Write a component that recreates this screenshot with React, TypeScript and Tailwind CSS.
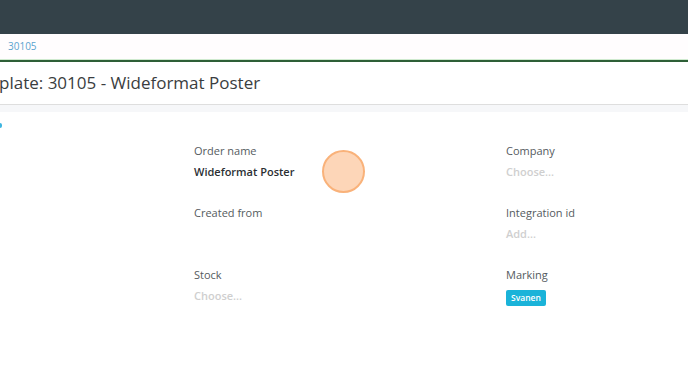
import { useState } from 'react';

const font = { fontFamily: '"Open Sans", "Liberation Sans", sans-serif' };

interface FieldProps {
  label: string;
  value?: string;
  placeholder?: string;
  badge?: string;
}

function Field({ label, value, placeholder, badge }: FieldProps) {
  return (
    <div className="flex flex-col">
      <div className="h-4 leading-4 text-[11px] text-[#555b60]">{label}</div>
      {value && (
        <div className="h-4 mt-[5px] leading-4 text-[11px] font-semibold text-[#2b2f33]">{value}</div>
      )}
      {placeholder && (
        <div className="h-4 mt-[5px] leading-4 text-[11px] font-semibold text-[#cfcfcf]">{placeholder}</div>
      )}
      {badge && (
        <div className="flex mt-[7px]">
          <span className="flex items-center h-4 px-[5px] rounded-[2px] bg-[#1ab3d9] text-white text-[8.5px] leading-none font-semibold">
            {badge}
          </span>
        </div>
      )}
    </div>
  );
}

export default function App() {
  const [clicked] = useState(true);

  return (
    <div className="relative w-[688px] h-[383px] overflow-hidden bg-white" style={font}>
      <div className="h-[34px] bg-[#344249]" />
      <div className="h-[26px] flex items-center pl-2 bg-[#fffdfe] border-b border-[#cfeacf]">
        <span className="text-[10px] text-[#5aa3cf]">30105</span>
      </div>
      <div className="h-[2px] bg-[#2e5f37]" />
      <div className="h-[43px] flex items-center border-b border-[#dedede]">
        <h1 className="text-[17px] text-[#3a3d40] -ml-[1px] font-normal">plate: 30105 - Wideformat Poster</h1>
      </div>
      <div className="h-[7px] bg-[#f6f7f9]" />
      <div className="relative">
        <div className="absolute left-0 top-[11px] w-[2px] h-[5px] bg-[#3db5e0] rounded-r" />
        <div className="pt-[31px] pl-[194px] grid grid-cols-[312px_1fr] gap-y-[25px]">
          <Field label="Order name" value="Wideformat Poster" />
          <Field label="Company" placeholder="Choose..." />
          <div className="h-[37px]">
            <Field label="Created from" />
          </div>
          <Field label="Integration id" placeholder="Add..." />
          <Field label="Stock" placeholder="Choose..." />
          <Field label="Marking" badge="Svanen" />
        </div>
      </div>
      {clicked && (
        <div className="absolute left-[322px] top-[150px] w-[43px] h-[43px] rounded-full bg-[#fdd6b8] border-2 border-[#f9b27a]" />
      )}
    </div>
  );
}
